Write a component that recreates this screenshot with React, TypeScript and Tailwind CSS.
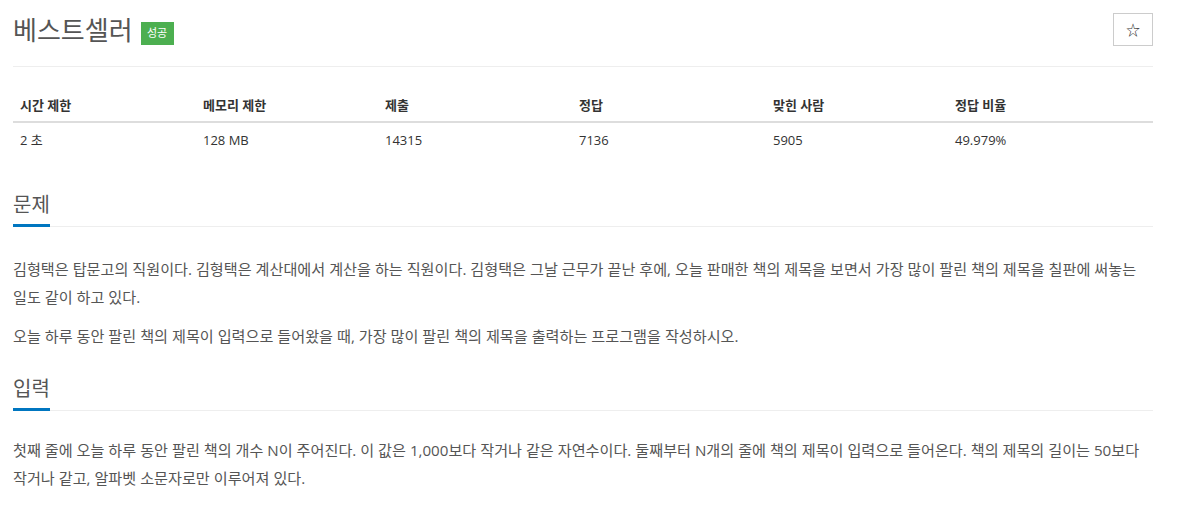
const font = "font-['Open_Sans','Noto_Sans_CJK_KR',sans-serif]"

const stats = [
  { label: "시간 제한", value: "2 초", w: "w-[183px]" },
  { label: "메모리 제한", value: "128 MB", w: "w-[182px]" },
  { label: "제출", value: "14315", w: "w-[194px]" },
  { label: "정답", value: "7136", w: "w-[194px]" },
  { label: "맞힌 사람", value: "5905", w: "w-[182px]" },
  { label: "정답 비율", value: "49.979%", w: "w-[205px]" },
]

function SectionTitle({ children, className = "" }: { children: string; className?: string }) {
  return (
    <div className={`border-b border-[#eee] ${className}`}>
      <h2 className="text-[20px] leading-[30px] text-[#555] pb-[4px] inline-block border-b-[3px] border-[#0076c0] -mb-px">
        {children}
      </h2>
    </div>
  )
}

export default function App() {
  return (
    <div className={`${font} bg-white w-[1181px] h-[509px] overflow-hidden text-[#555]`}>
      <div className="ml-[13px] w-[1140px]">
        <div className="flex items-start justify-between pt-[13px] pb-[20px] border-b border-[#eee]">
          <div className="flex items-center gap-[8px] pt-[1px]">
            <h1 className="text-[26px] leading-[32px] text-[#555]">베스트셀러</h1>
            <span className="mt-[6px] h-[23px] w-[33px] flex items-center justify-center bg-[#4caf50] text-white text-[11px]">
              성공
            </span>
          </div>
          <button className="w-[40px] h-[33px] border border-[#ccc] flex items-center justify-center text-[#333] text-[14px]">
            ☆
          </button>
        </div>

        <table className="mt-[20px] w-full text-[13px] text-[#333] border-collapse">
          <thead>
            <tr className="border-b-2 border-[#ddd]">
              {stats.map((s) => (
                <th key={s.label} className={`${s.w} text-left font-bold px-[7px] pt-[8px] pb-[6px] leading-[20px]`}>
                  {s.label}
                </th>
              ))}
            </tr>
          </thead>
          <tbody>
            <tr>
              {stats.map((s) => (
                <td key={s.label} className="px-[7px] pt-[7px] pb-[8px] leading-[20px]">
                  {s.value}
                </td>
              ))}
            </tr>
          </tbody>
        </table>

        <SectionTitle className="mt-[32px]">문제</SectionTitle>
        <div className="mt-[28px] text-[15.15px] leading-[28px] break-keep">
          <p className="mb-[11px]">
            김형택은 탑문고의 직원이다. 김형택은 계산대에서 계산을 하는 직원이다. 김형택은 그날 근무가 끝난 후에, 오늘 판매한 책의 제목을 보면서 가장 많이 팔린 책의 제목을 칠판에 써놓는 일도 같이 하고 있다.
          </p>
          <p>오늘 하루 동안 팔린 책의 제목이 입력으로 들어왔을 때, 가장 많이 팔린 책의 제목을 출력하는 프로그램을 작성하시오.</p>
        </div>

        <SectionTitle className="mt-[24px]">입력</SectionTitle>
        <div className="mt-[25px] text-[15.15px] leading-[28px] break-keep">
          <p>
            첫째 줄에 오늘 하루 동안 팔린 책의 개수 N이 주어진다. 이 값은 1,000보다 작거나 같은 자연수이다. 둘째부터 N개의 줄에 책의 제목이 입력으로 들어온다. 책의 제목의 길이는 50보다 작거나 같고, 알파벳 소문자로만 이루어져 있다.
          </p>
        </div>
      </div>
    </div>
  )
}
